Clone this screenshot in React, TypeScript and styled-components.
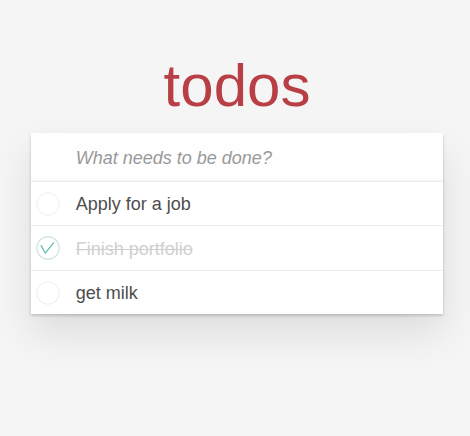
import React from "react";
import styled, { createGlobalStyle } from "styled-components";

const GlobalStyle = createGlobalStyle`
  html, body { margin: 0; padding: 0; background: #f5f5f5; }
  body {
    font-family: "Liberation Sans", Arial, Helvetica, sans-serif;
    color: #4d4d4d;
    -webkit-font-smoothing: antialiased;
  }
  * { box-sizing: border-box; }
`;

const Page = styled.div`
  width: 470px;
  min-height: 436px;
  padding: 56px 0 40px 4px;
  display: flex;
  flex-direction: column;
  align-items: center;
`;

const Title = styled.h1`
  margin: 0 0 17px;
  font-size: 60px;
  line-height: 60px;
  font-weight: 200;
  color: #b83f45;
  text-align: center;
  text-rendering: optimizeLegibility;
`;

const Card = styled.section`
  width: 412.5px;
  background: #fff;
  box-shadow: 0 1.5px 3px rgba(0, 0, 0, 0.2), 0 19px 38px rgba(0, 0, 0, 0.1);
`;

const NewTodo = styled.input`
  display: block;
  width: 100%;
  height: 48.5px;
  margin: 0;
  padding: 3px 12px 0 45px;
  border: none;
  border-bottom: 1px solid #ededed;
  outline: none;
  font-family: inherit;
  font-size: 18px;
  color: #4d4d4d;
  background: rgba(0, 0, 0, 0.003);
  box-shadow: inset 0 -1.5px 1px rgba(0, 0, 0, 0.03);
  &::placeholder {
    font-style: italic;
    color: #999;
  }
`;

const List = styled.ul`
  list-style: none;
  margin: 0;
  padding: 0;
`;

const Item = styled.li`
  display: flex;
  align-items: center;
  height: 44.5px;
  border-bottom: 1px solid #ededed;
  &:last-child {
    border-bottom: none;
    height: 43.5px;
  }
`;

const Toggle = styled.span`
  width: 45px;
  flex: none;
  display: flex;
  align-items: center;
  padding-left: 5px;
  padding-top: 1px;
`;

const Label = styled.label<{ $done?: boolean }>`
  font-size: 18px;
  line-height: 21.6px;
  padding-top: 4px;
  color: ${(p) => (p.$done ? "#cfcfcf" : "#4d4d4d")};
  text-decoration: ${(p) => (p.$done ? "line-through" : "none")};
  word-break: break-all;
`;

const CheckIcon = ({ done }: { done: boolean }) => (
  <svg width="24" height="24" viewBox="0 0 24 24">
    <circle
      cx="12"
      cy="12"
      r="11.25"
      fill="none"
      stroke={done ? "#bddad5" : "#ededed"}
      strokeWidth="1"
    />
    {done && (
      <polyline
        points="5.2,9.6 9.2,17.2 17.6,6.8"
        fill="none"
        stroke="#5dc2af"
        strokeWidth="1.25"
        strokeLinecap="round"
        strokeLinejoin="miter"
      />
    )}
  </svg>
);

const todos = [
  { text: "Apply for a job", done: false },
  { text: "Finish portfolio", done: true },
  { text: "get milk", done: false },
];

export default function App() {
  return (
    <>
      <GlobalStyle />
      <Page>
        <Title>todos</Title>
        <Card>
          <NewTodo placeholder="What needs to be done?" readOnly />
          <List>
            {todos.map((t) => (
              <Item key={t.text}>
                <Toggle>
                  <CheckIcon done={t.done} />
                </Toggle>
                <Label $done={t.done}>{t.text}</Label>
              </Item>
            ))}
          </List>
        </Card>
      </Page>
    </>
  );
}
